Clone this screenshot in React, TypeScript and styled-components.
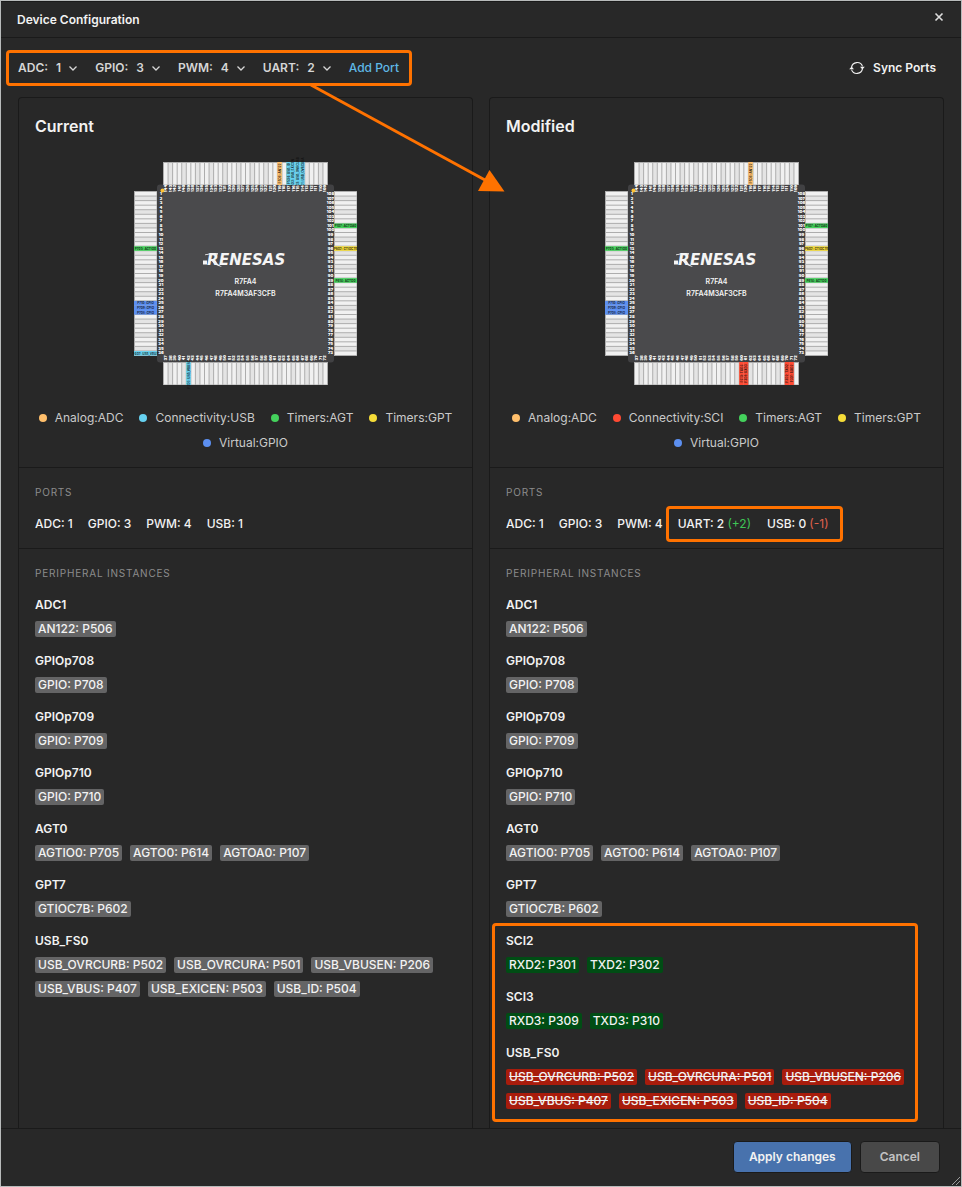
import React from "react";
import styled, { createGlobalStyle } from "styled-components";

const ORANGE = "#ff7200";
const LINE = "#1a1a1a";
const AMBER = "#ffbf6b";
const CYAN = "#66d1f0";
const GREEN = "#44d15c";
const YELLOW = "#f5dc38";
const BLUE = "#5c8ff0";
const RED = "#ff4a33";

const GlobalStyle = createGlobalStyle`
  *, *::before, *::after { box-sizing: border-box; }
  body {
    margin: 0;
    background: #282828;
    color: #f2f2f2;
    font: 500 12px/16px Inter, "Liberation Sans", sans-serif;
  }
  h1, h2, h3, h4, p, ul { margin: 0; padding: 0; }
  ul { list-style: none; }
  button, select { font: inherit; color: inherit; }
`;

const Dialog = styled.div`
  position: relative;
  display: flex;
  flex-direction: column;
  min-height: 100vh;
  border: 1px solid #b8bbbb;
  background: #282828;
`;

const Header = styled.header`
  display: flex;
  align-items: center;
  justify-content: space-between;
  height: 37px;
  padding: 0 16px;
  border-top: 1px solid ${LINE};
  border-bottom: 1px solid ${LINE};
`;

const Title = styled.h1`
  font-size: 12px;
  font-weight: 600;
`;

const IconButton = styled.button`
  display: flex;
  padding: 0 1px 6px;
  border: 0;
  background: none;
`;

const Toolbar = styled.div`
  display: flex;
  align-items: center;
  justify-content: space-between;
  height: 59px;
  padding: 0 25px 0 17px;
`;

const PortControls = styled.div`
  position: relative;
  display: flex;
  align-items: center;
  gap: 17px;
  color: #d6d6d6;
`;

const PortField = styled.label`
  display: flex;
  gap: 8px;
  font-weight: 600;
`;

const SelectBox = styled.span`
  display: grid;
  align-items: center;
  justify-items: end;

  > * { grid-area: 1 / 1; }
  svg { pointer-events: none; }
`;

const PortSelect = styled.select`
  appearance: none;
  field-sizing: content;
  height: 16px;
  padding: 0 17px 0 0;
  border: 0;
  background: transparent;
`;

const AddPort = styled.button`
  padding: 0;
  border: 0;
  background: none;
  color: #5fb8e6;
`;

const SyncButton = styled.button`
  display: flex;
  align-items: center;
  gap: 8px;
  padding: 0;
  border: 0;
  background: none;
  font-weight: 600;
`;

/* Outline round its positioned parent; inset is given in the order of the CSS property. */
const Callout = styled.div<{ $inset: string }>`
  position: absolute;
  inset: ${(p) => p.$inset};
  border: 3px solid ${ORANGE};
  border-radius: 4px;
  pointer-events: none;
`;

const ArrowSvg = styled.svg`
  position: absolute;
  z-index: 1;
  left: 300px;
  top: 80px;
  pointer-events: none;
`;

const Panels = styled.main`
  display: grid;
  grid-template-columns: 1fr 1fr;
  flex: 1;
  gap: 16px;
  padding: 0 17px;
`;

const Panel = styled.section`
  border: 1px solid ${LINE};
  border-bottom: 0;
  border-radius: 4px 4px 0 0;
`;

const Block = styled.div`
  padding: 16px;

  & + & { border-top: 1px solid ${LINE}; }
`;

const PanelTitle = styled.h2`
  font-size: 16px;
  line-height: 24px;
  font-weight: 600;
`;

const ChipSvg = styled.svg`
  display: block;
  margin: 24px auto 25px;
  overflow: visible;
`;

const Legend = styled.ul`
  display: flex;
  flex-wrap: wrap;
  justify-content: center;
  gap: 9px 16px;
  color: #cacaca;
  font-weight: 400;
`;

const LegendItem = styled.li<{ $color: string }>`
  display: flex;
  align-items: center;
  gap: 8px;

  &::before {
    content: "";
    width: 8px;
    height: 8px;
    border-radius: 50%;
    background: ${(p) => p.$color};
  }
`;

const Caption = styled.h3`
  color: #8c8c8c;
  font-size: 10px;
  font-weight: 400;
  letter-spacing: 0.08em;
`;

const PortList = styled.div`
  display: flex;
  flex-wrap: wrap;
  gap: 15px;
  margin-top: 16px;
`;

const ChangedPorts = styled.div`
  position: relative;
  display: flex;
  gap: 16px;
`;

const Delta = styled.span<{ $added?: boolean }>`
  color: ${(p) => (p.$added ? "#3fc456" : "#e0614c")};
  font-weight: 400;
`;

const Instances = styled.div`
  display: grid;
  gap: 16px;
  margin-top: 16px;
`;

const ChangedInstances = styled(Instances)`
  position: relative;
  margin-top: 0;
`;

const InstanceName = styled.h4`
  font-size: 12px;
  font-weight: 600;
`;

const Tags = styled.ul`
  display: flex;
  flex-wrap: wrap;
  gap: 8px;
  margin-top: 8px;
`;

type TagState = "same" | "added" | "removed";
const tagColor = { same: "#646465", added: "#004d14", removed: "#a81c0c" };

const Tag = styled.li<{ $state: TagState }>`
  padding: 0 3px;
  border-radius: 2px;
  background: ${(p) => tagColor[p.$state]};
  text-decoration: ${(p) => (p.$state === "removed" ? "line-through" : "none")};
`;

const Footer = styled.footer`
  display: flex;
  align-items: center;
  justify-content: flex-end;
  gap: 8px;
  height: 58px;
  padding: 0 21px 2px;
  border-top: 1px solid ${LINE};
`;

const Button = styled.button<{ $primary?: boolean }>`
  height: 32px;
  padding: 0 ${(p) => (p.$primary ? 15 : 19)}px;
  border: 1px solid ${LINE};
  border-radius: 4px;
  background: ${(p) => (p.$primary ? "#4872ad" : "#484848")};
  color: ${(p) => (p.$primary ? "#f2f2f2" : "#c2c2c2")};
  font-weight: 600;
`;

const Grip = styled.svg`
  position: absolute;
  right: 0;
  bottom: 0;
`;

type Side = "top" | "right" | "bottom" | "left";
type Pin = { side: Side; index: number; color: string; text: string };

const sharedPins: Pin[] = [
  { side: "top", index: 25, color: AMBER, text: "P506: AN122" },
  { side: "left", index: 12, color: GREEN, text: "P705: AGTIO0" },
  { side: "left", index: 24, color: BLUE, text: "P710: GPIO" },
  { side: "left", index: 25, color: BLUE, text: "P709: GPIO" },
  { side: "left", index: 26, color: BLUE, text: "P708: GPIO" },
  { side: "right", index: 7, color: GREEN, text: "P107: AGTOA0" },
  { side: "right", index: 12, color: YELLOW, text: "P602: GTIOC7B" },
  { side: "right", index: 19, color: GREEN, text: "P614: AGTO0" },
];

const currentPins: Pin[] = [
  ...sharedPins,
  { side: "top", index: 27, color: CYAN, text: "P504: USB_ID" },
  { side: "top", index: 28, color: CYAN, text: "P503: USB_EXICEN" },
  { side: "top", index: 29, color: CYAN, text: "P502: USB_OVRCURB" },
  { side: "top", index: 30, color: CYAN, text: "P501: USB_OVRCURA" },
  { side: "left", index: 35, color: CYAN, text: "P407: USB_VBUS" },
  { side: "bottom", index: 5, color: CYAN, text: "P206: USB_VBUSEN" },
];

const modifiedPins: Pin[] = [
  ...sharedPins,
  { side: "bottom", index: 23, color: RED, text: "P310: TXD3" },
  { side: "bottom", index: 24, color: RED, text: "P309: RXD3" },
  { side: "bottom", index: 33, color: RED, text: "P302: TXD2" },
  { side: "bottom", index: 34, color: RED, text: "P301: RXD2" },
];

const PINS = 36;
const PITCH = 164 / PINS;
const sides: Side[] = ["top", "right", "bottom", "left"];

/* Every side is drawn as a row of upright pins, then turned into place. */
const sideTransform: Record<Side, string> = {
  top: "translate(30 0)",
  bottom: "translate(30 200)",
  left: "translate(0 193) rotate(-90)",
  right: "translate(200 193) rotate(-90)",
};

const isVertical = (side: Side) => side === "left" || side === "right";

function pinNumber(side: Side, i: number) {
  if (side === "left") return i + 1;
  if (side === "bottom") return 37 + i;
  if (side === "right") return 108 - i;
  return 144 - i;
}

function PinRow({ side, pins }: { side: Side; pins: Pin[] }) {
  const place = (i: number) => (isVertical(side) ? PINS - 1 - i : i) * PITCH;
  return (
    <g transform={sideTransform[side]}>
      <rect x="-1" width="165" height="23" fill="#adadad" />
      {Array.from({ length: PINS }, (_, i) => (
        <rect key={i} x={place(i)} y="1" width={PITCH - 1} height="21.5" fill={i % 3 === 1 ? "#e4e4e4" : "#f1f1f1"} />
      ))}
      {pins.map((pin) => (
        <g key={pin.text} transform={`translate(${place(pin.index)} 0)`}>
          <rect x="-0.6" width={PITCH} height="23" fill={pin.color} />
          <text
            transform={isVertical(side) ? "translate(1.7 11.5) rotate(90)" : "translate(1.7 11.5) rotate(-90)"}
            dy="1.2"
            textAnchor="middle"
            fontSize="3.1"
            fontWeight="700"
            fill="#111"
            fillOpacity="0.85"
          >
            {pin.text}
          </text>
        </g>
      ))}
    </g>
  );
}

function PinNumbers({ side }: { side: Side }) {
  return (
    <g fill="#ffffff" fontSize="4" fontWeight="900" textAnchor="middle">
      {Array.from({ length: PINS }, (_, i) => {
        const along = 29.5 + PITCH * (i + 0.45);
        const x = side === "left" ? 27 : side === "right" ? 196.5 : along;
        const y = side === "top" ? 26.5 : side === "bottom" ? 196 : along;
        return (
          <text
            key={i}
            transform={`translate(${x} ${y})${isVertical(side) ? "" : " rotate(-90)"}`}
            dy="1.4"
          >
            {pinNumber(side, i)}
          </text>
        );
      })}
    </g>
  );
}

function Chip({ pins }: { pins: Pin[] }) {
  return (
    <ChipSvg width="223" height="223" role="img" aria-label="Renesas R7FA4M3AF3CFB pin map">
      <rect x="23" y="22.5" width="177" height="178" rx="3" fill="#414143" />
      {sides.map((side) => (
        <PinRow key={side} side={side} pins={pins.filter((p) => p.side === side)} />
      ))}
      <rect x="29" y="29" width="164.5" height="164.5" fill="#4a4a4c" />
      {sides.map((side) => (
        <PinNumbers key={side} side={side} />
      ))}
      <circle cx="28.5" cy="28.5" r="2" fill="#ffc233" />
      <g fill="#f5f5f5">
        <path d="M69 98.5h4v4h-4z" />
        <path d="M71 92.5Q77 90.3 84 91.3L84 92.6Q77 91.8 71 93.2z" />
        <path d="M77 98L80.5 98Q83 102 88 105Q80.5 103.5 77 98z" />
        <g fontFamily='"DejaVu Sans", sans-serif' fontWeight="700" fontStyle="italic" fontSize="15">
          <text x="73" y="102.5">R</text>
          <text x="85" y="102.5">ENESAS</text>
        </g>
        <g fontSize="7" fontWeight="600" textAnchor="middle">
          <text x="111.5" y="122">R7FA4</text>
          <text x="111.5" y="134">R7FA4M3AF3CFB</text>
        </g>
      </g>
    </ChipSvg>
  );
}

type Signal = [name: string, pins: string[]];

const sharedInstances: Signal[] = [
  ["ADC1", ["AN122: P506"]],
  ["GPIOp708", ["GPIO: P708"]],
  ["GPIOp709", ["GPIO: P709"]],
  ["GPIOp710", ["GPIO: P710"]],
  ["AGT0", ["AGTIO0: P705", "AGTO0: P614", "AGTOA0: P107"]],
  ["GPT7", ["GTIOC7B: P602"]],
];

const usb: Signal = [
  "USB_FS0",
  [
    "USB_OVRCURB: P502",
    "USB_OVRCURA: P501",
    "USB_VBUSEN: P206",
    "USB_VBUS: P407",
    "USB_EXICEN: P503",
    "USB_ID: P504",
  ],
];

function Instance({ data, state = "same" }: { data: Signal; state?: TagState }) {
  return (
    <div>
      <InstanceName>{data[0]}</InstanceName>
      <Tags>
        {data[1].map((pin) => (
          <Tag key={pin} $state={state}>{pin}</Tag>
        ))}
      </Tags>
    </div>
  );
}

function PinMap({ title, pins, bus }: { title: string; pins: Pin[]; bus: [string, string] }) {
  const legend: [string, string][] = [
    ["Analog:ADC", AMBER],
    bus,
    ["Timers:AGT", GREEN],
    ["Timers:GPT", YELLOW],
    ["Virtual:GPIO", BLUE],
  ];
  return (
    <Block>
      <PanelTitle>{title}</PanelTitle>
      <Chip pins={pins} />
      <Legend>
        {legend.map(([name, color]) => (
          <LegendItem key={name} $color={color}>{name}</LegendItem>
        ))}
      </Legend>
    </Block>
  );
}

function PortPicker({ name, value }: { name: string; value: number }) {
  return (
    <PortField>
      {name}:
      <SelectBox>
        <PortSelect defaultValue={value}>
          {[0, 1, 2, 3, 4].map((n) => (
            <option key={n}>{n}</option>
          ))}
        </PortSelect>
        <svg width="10" height="10" fill="none" stroke="#d6d6d6" strokeWidth="1.3">
          <path d="M1.5 3.5L5 7L8.5 3.5" />
        </svg>
      </SelectBox>
    </PortField>
  );
}

export default function App() {
  return (
    <Dialog role="dialog" aria-label="Device Configuration">
      <GlobalStyle />
      <Header>
        <Title>Device Configuration</Title>
        <IconButton aria-label="Close">
          <svg width="10" height="10" stroke="#dedede" strokeWidth="1.6">
            <path d="M1.5 1.5L8.5 8.5M8.5 1.5L1.5 8.5" />
          </svg>
        </IconButton>
      </Header>

      <Toolbar>
        <PortControls>
          <PortPicker name="ADC" value={1} />
          <PortPicker name="GPIO" value={3} />
          <PortPicker name="PWM" value={4} />
          <PortPicker name="UART" value={2} />
          <AddPort>Add Port</AddPort>
          <Callout $inset="-10px -13px -10px -12px" />
        </PortControls>
        <SyncButton>
          <svg width="16" height="16" fill="none" stroke="#f2f2f2" strokeWidth="1.1">
            <path d="M2.5 7.3A5.7 5.7 0 0 1 13.5 6.4M13.5 8.7A5.7 5.7 0 0 1 2.5 9.6" />
            <path d="M0.2 9.2L2.6 6.6L5 9.2zM11 6.8L13.4 9.4L15.8 6.8z" fill="#f2f2f2" stroke="none" />
          </svg>
          Sync Ports
        </SyncButton>
      </Toolbar>

      <ArrowSvg width="210" height="116" fill={ORANGE}>
        <path d="M10 4L184 99" stroke={ORANGE} strokeWidth="3" />
        <path d="M188.5 89L203.5 110.5L177 110z" />
      </ArrowSvg>

      <Panels>
        <Panel>
          <PinMap title="Current" pins={currentPins} bus={["Connectivity:USB", CYAN]} />
          <Block>
            <Caption>PORTS</Caption>
            <PortList>
              <span>ADC: 1</span>
              <span>GPIO: 3</span>
              <span>PWM: 4</span>
              <span>USB: 1</span>
            </PortList>
          </Block>
          <Block>
            <Caption>PERIPHERAL INSTANCES</Caption>
            <Instances>
              {[...sharedInstances, usb].map((item) => (
                <Instance key={item[0]} data={item} />
              ))}
            </Instances>
          </Block>
        </Panel>

        <Panel>
          <PinMap title="Modified" pins={modifiedPins} bus={["Connectivity:SCI", RED]} />
          <Block>
            <Caption>PORTS</Caption>
            <PortList>
              <span>ADC: 1</span>
              <span>GPIO: 3</span>
              <span>PWM: 4</span>
              <ChangedPorts>
                <span>UART: 2 <Delta $added>(+2)</Delta></span>
                <span>USB: 0 <Delta>(-1)</Delta></span>
                <Callout $inset="-10px -14px -10px -12px" />
              </ChangedPorts>
            </PortList>
          </Block>
          <Block>
            <Caption>PERIPHERAL INSTANCES</Caption>
            <Instances>
              {sharedInstances.map((item) => (
                <Instance key={item[0]} data={item} />
              ))}
              <ChangedInstances>
                <Instance data={["SCI2", ["RXD2: P301", "TXD2: P302"]]} state="added" />
                <Instance data={["SCI3", ["RXD3: P309", "TXD3: P310"]]} state="added" />
                <Instance data={usb} state="removed" />
                <Callout $inset="-10px 9px -13px -14px" />
              </ChangedInstances>
            </Instances>
          </Block>
        </Panel>
      </Panels>

      <Footer>
        <Button $primary>Apply changes</Button>
        <Button>Cancel</Button>
      </Footer>
      <Grip width="10" height="10" stroke="#9a9a9a">
        <path d="M1 9L9 1M5 9L9 5" />
      </Grip>
    </Dialog>
  );
}
